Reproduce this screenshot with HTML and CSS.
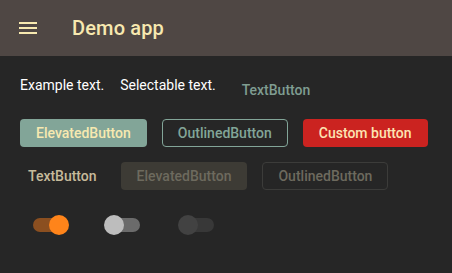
FILE: index.html
```html
<!DOCTYPE html>
<html lang="en">

<head>
    <meta charset="UTF-8">
    <meta name="viewport" content="width=device-width, initial-scale=1.0">
    <title>Demo app</title>
    <link rel="stylesheet" href="styles.css">
</head>

<body>
    <div class="app-bar">
        <button class="menu-button" aria-label="Menu">
            <svg width="24" height="24" viewBox="0 0 24 24">
                <path d="M3 18h18v-2H3v2zm0-5h18v-2H3v2zm0-7v2h18V6H3z" fill="currentColor" />
            </svg>
        </button>
        <h1 class="title">Demo app</h1>
    </div>

    <div class="content">
        <div class="row row-text">
            <span class="plain-text">Example text.</span>
            <span class="plain-text">Selectable text.</span>
            <button class="btn btn-text btn-text-muted">TextButton</button>
        </div>

        <div class="row row-buttons">
            <button class="btn btn-elevated">ElevatedButton</button>
            <button class="btn btn-outlined">OutlinedButton</button>
            <button class="btn btn-custom">Custom button</button>
        </div>

        <div class="row row-buttons row-disabled">
            <button class="btn btn-text btn-text-khaki">TextButton</button>
            <button class="btn btn-elevated" disabled>ElevatedButton</button>
            <button class="btn btn-outlined" disabled>OutlinedButton</button>
        </div>

        <div class="row row-switches">
            <div class="switch switch-on"><span class="track"></span><span class="thumb"></span></div>
            <div class="switch switch-off"><span class="track"></span><span class="thumb"></span></div>
            <div class="switch switch-disabled"><span class="track"></span><span class="thumb"></span></div>
        </div>
    </div>
</body>

</html>
```

FILE: styles.css
```css
:root {
    --bar-bg: #4f4744;
    --bg-color: #262626;
    --cream: #f7e9b0;
    --sage: #82a598;
    --red: #cb2320;
    --khaki: #c6bb9b;
    --disabled-text: #6d6a5e;
}

body {
    font-family: Roboto, 'Noto Sans', sans-serif;
    background-color: var(--bg-color);
    margin: 0;
    padding: 0;
    height: 273px;
    overflow: hidden;
    color: #ffffff;
}

.app-bar {
    height: 56px;
    background-color: var(--bar-bg);
    display: flex;
    align-items: center;
    padding: 0 16px;
    color: var(--cream);
}

.menu-button {
    background: none;
    border: none;
    padding: 0;
    width: 24px;
    height: 24px;
    color: var(--cream);
    display: flex;
}

.title {
    margin: 0 0 0 32px;
    font-size: 20px;
    font-weight: 500;
    letter-spacing: 0.15px;
}

.content {
    padding: 0 20px;
}

.row {
    display: flex;
    align-items: flex-start;
}

.row-text {
    margin-top: 19px;
    line-height: 20px;
    font-size: 14px;
}

.plain-text {
    margin-right: 16px;
}

.row-text .btn-text {
    margin-top: 5px;
    margin-left: 2px;
}

.btn {
    font-family: inherit;
    font-size: 14px;
    font-weight: 500;
    height: 28px;
    padding: 0 15px;
    border-radius: 4px;
    border: 1px solid transparent;
    background: none;
    cursor: pointer;
    white-space: nowrap;
}

.row-buttons {
    gap: 15px;
}

.row-text + .row-buttons {
    margin-top: 19px;
}

.row-disabled {
    margin-top: 15px;
}

.row-disabled .btn-elevated {
    margin-left: 1px;
}

.btn-text {
    padding: 0 7px;
    height: 20px;
    line-height: 18px;
}

.row-disabled .btn-text {
    height: 28px;
}

.btn-text-muted {
    color: #7f9d91;
}

.btn-text-khaki {
    color: var(--khaki);
}

.btn-elevated {
    background-color: var(--sage);
    color: var(--cream);
}

.btn-outlined {
    border-color: var(--sage);
    color: var(--sage);
}

.btn-custom {
    background-color: var(--red);
    color: #fde4b2;
}

.btn-elevated:disabled {
    background-color: #3d3b35;
    color: var(--disabled-text);
}

.btn-outlined:disabled {
    border-color: #3c3c3a;
    color: var(--disabled-text);
}

.row-switches {
    margin-top: 25px;
    padding-left: 10px;
    gap: 34px;
}

.switch {
    position: relative;
    width: 40px;
    height: 20px;
}

.track {
    position: absolute;
    left: 3px;
    top: 3px;
    width: 33px;
    height: 14px;
    border-radius: 7px;
}

.thumb {
    position: absolute;
    top: 0;
    left: 0;
    width: 20px;
    height: 20px;
    border-radius: 50%;
}

.switch-on .track {
    background-color: #8b4f20;
}

.switch-on .thumb {
    left: 19px;
    background-color: #ff841a;
}

.switch-off .track {
    background-color: #6b6b6b;
}

.switch-off .thumb {
    background-color: #bdbdbd;
}

.switch-disabled .track {
    background-color: #383838;
}

.switch-disabled .thumb {
    background-color: #424242;
}
```
